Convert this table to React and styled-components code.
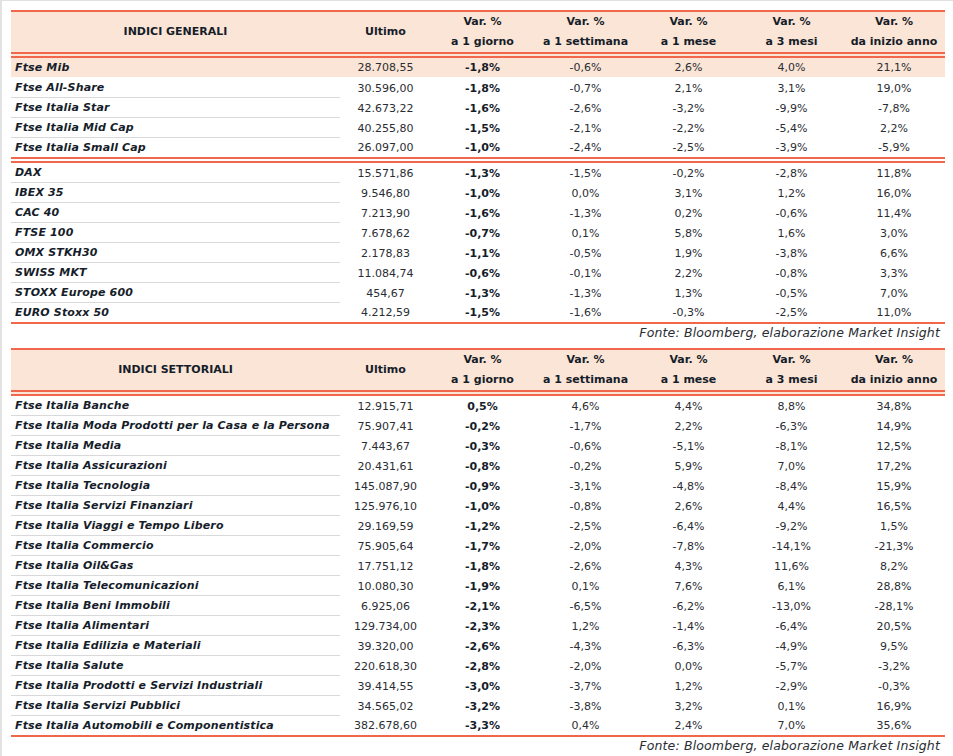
import React from "react";
import styled, { createGlobalStyle } from "styled-components";

const RED = "#f0674c";
const PEACH = "#fbe5d6";
const LINE = "#d9d9d9";
const INK = "#161d2a";

const GlobalStyle = createGlobalStyle`
  html, body {
    margin: 0;
    padding: 0;
    background: #ffffff;
  }
  body {
    font-family: "DejaVu Sans", "Liberation Sans", sans-serif;
    color: ${INK};
  }
`;

// CSS
const Frame = styled.div`
  width: 953px;
  height: 756px;
  box-sizing: border-box;
  border-left: 2px solid #e2e2e2;
  border-top: 1px solid #e2e2e2;
  padding: 9px 0 0 9px;
  overflow: hidden;
`;

const Table = styled.table`
  width: 934px;
  table-layout: fixed;
  border-collapse: separate;
  border-spacing: 0;
  font-size: 11px;
`;

const HeadCell = styled.th`
  height: 40px;
  padding: 0;
  background: ${PEACH};
  border-top: 2px solid ${RED};
  border-bottom: 6px double ${RED};
  font-weight: bold;
  font-size: 11px;
  line-height: 20px;
  text-align: center;
  vertical-align: middle;
  white-space: nowrap;
  color: ${INK};
`;

const Cell = styled.td`
  height: 19px;
  padding: 0;
  line-height: 19px;
  white-space: nowrap;
  text-align: ${(p) => (p.$name ? "left" : "center")};
  padding-left: ${(p) => (p.$name ? "4px" : "0")};
  letter-spacing: ${(p) => (p.$name ? "0.15px" : "0")};
  font-weight: ${(p) => (p.$name || p.$strong ? "bold" : "normal")};
  font-style: ${(p) => (p.$name ? "italic" : "normal")};
  color: ${(p) => (p.$name || p.$strong ? INK : "#2a2d33")};
  background: ${(p) => (p.$highlight ? PEACH : "transparent")};
  border-bottom: ${(p) =>
    p.$end === "double"
      ? `6px double ${RED}`
      : p.$end === "single"
      ? `2px solid ${RED}`
      : p.$highlight
      ? "1px solid #ffffff"
      : p.$name
      ? `1px solid ${LINE}`
      : "none"};
`;

const Source = styled.div`
  width: 934px;
  box-sizing: border-box;
  padding-right: 5px;
  height: 18px;
  line-height: 18px;
  margin-bottom: 6px;
  text-align: right;
  font-style: italic;
  font-size: 12.5px;
  letter-spacing: 0.15px;
  color: #2a2d33;
`;

const widths = [329, 91, 103, 103, 103, 103, 102];

const generali = [
  [
    ["Ftse Mib", "28.708,55", "-1,8%", "-0,6%", "2,6%", "4,0%", "21,1%"],
    ["Ftse All-Share", "30.596,00", "-1,8%", "-0,7%", "2,1%", "3,1%", "19,0%"],
    ["Ftse Italia Star", "42.673,22", "-1,6%", "-2,6%", "-3,2%", "-9,9%", "-7,8%"],
    ["Ftse Italia Mid Cap", "40.255,80", "-1,5%", "-2,1%", "-2,2%", "-5,4%", "2,2%"],
    ["Ftse Italia Small Cap", "26.097,00", "-1,0%", "-2,4%", "-2,5%", "-3,9%", "-5,9%"],
  ],
  [
    ["DAX", "15.571,86", "-1,3%", "-1,5%", "-0,2%", "-2,8%", "11,8%"],
    ["IBEX 35", "9.546,80", "-1,0%", "0,0%", "3,1%", "1,2%", "16,0%"],
    ["CAC 40", "7.213,90", "-1,6%", "-1,3%", "0,2%", "-0,6%", "11,4%"],
    ["FTSE 100", "7.678,62", "-0,7%", "0,1%", "5,8%", "1,6%", "3,0%"],
    ["OMX STKH30", "2.178,83", "-1,1%", "-0,5%", "1,9%", "-3,8%", "6,6%"],
    ["SWISS MKT", "11.084,74", "-0,6%", "-0,1%", "2,2%", "-0,8%", "3,3%"],
    ["STOXX Europe 600", "454,67", "-1,3%", "-1,3%", "1,3%", "-0,5%", "7,0%"],
    ["EURO Stoxx 50", "4.212,59", "-1,5%", "-1,6%", "-0,3%", "-2,5%", "11,0%"],
  ],
];

const settoriali = [
  [
    ["Ftse Italia Banche", "12.915,71", "0,5%", "4,6%", "4,4%", "8,8%", "34,8%"],
    ["Ftse Italia Moda Prodotti per la Casa e la Persona", "75.907,41", "-0,2%", "-1,7%", "2,2%", "-6,3%", "14,9%"],
    ["Ftse Italia Media", "7.443,67", "-0,3%", "-0,6%", "-5,1%", "-8,1%", "12,5%"],
    ["Ftse Italia Assicurazioni", "20.431,61", "-0,8%", "-0,2%", "5,9%", "7,0%", "17,2%"],
    ["Ftse Italia Tecnologia", "145.087,90", "-0,9%", "-3,1%", "-4,8%", "-8,4%", "15,9%"],
    ["Ftse Italia Servizi Finanziari", "125.976,10", "-1,0%", "-0,8%", "2,6%", "4,4%", "16,5%"],
    ["Ftse Italia Viaggi e Tempo Libero", "29.169,59", "-1,2%", "-2,5%", "-6,4%", "-9,2%", "1,5%"],
    ["Ftse Italia Commercio", "75.905,64", "-1,7%", "-2,0%", "-7,8%", "-14,1%", "-21,3%"],
    ["Ftse Italia Oil&Gas", "17.751,12", "-1,8%", "-2,6%", "4,3%", "11,6%", "8,2%"],
    ["Ftse Italia Telecomunicazioni", "10.080,30", "-1,9%", "0,1%", "7,6%", "6,1%", "28,8%"],
    ["Ftse Italia Beni Immobili", "6.925,06", "-2,1%", "-6,5%", "-6,2%", "-13,0%", "-28,1%"],
    ["Ftse Italia Alimentari", "129.734,00", "-2,3%", "1,2%", "-1,4%", "-6,4%", "20,5%"],
    ["Ftse Italia Edilizia e Materiali", "39.320,00", "-2,6%", "-4,3%", "-6,3%", "-4,9%", "9,5%"],
    ["Ftse Italia Salute", "220.618,30", "-2,8%", "-2,0%", "0,0%", "-5,7%", "-3,2%"],
    ["Ftse Italia Prodotti e Servizi Industriali", "39.414,55", "-3,0%", "-3,7%", "1,2%", "-2,9%", "-0,3%"],
    ["Ftse Italia Servizi Pubblici", "34.565,02", "-3,2%", "-3,8%", "3,2%", "0,1%", "16,9%"],
    ["Ftse Italia Automobili e Componentistica", "382.678,60", "-3,3%", "0,4%", "2,4%", "7,0%", "35,6%"],
  ],
];

const MarketTable = ({ title, groups, highlightFirst }) => (
  <Table>
    <colgroup>
      {widths.map((w, i) => (
        <col key={i} style={{ width: w }} />
      ))}
    </colgroup>
    <thead>
      <tr>
        <HeadCell>{title}</HeadCell>
        <HeadCell>Ultimo</HeadCell>
        <HeadCell>Var. %<br />a 1 giorno</HeadCell>
        <HeadCell>Var. %<br />a 1 settimana</HeadCell>
        <HeadCell>Var. %<br />a 1 mese</HeadCell>
        <HeadCell>Var. %<br />a 3 mesi</HeadCell>
        <HeadCell>Var. %<br />da inizio anno</HeadCell>
      </tr>
    </thead>
    <tbody>
      {groups.map((rows, g) =>
        rows.map((row, r) => {
          const isLast = r === rows.length - 1;
          const end = isLast ? (g === groups.length - 1 ? "single" : "double") : undefined;
          const highlight = highlightFirst && g === 0 && r === 0;
          return (
            <tr key={`${g}-${r}`}>
              {row.map((v, c) => (
                <Cell
                  key={c}
                  $name={c === 0}
                  $strong={c === 2}
                  $end={end}
                  $highlight={highlight}
                >
                  {v}
                </Cell>
              ))}
            </tr>
          );
        })
      )}
    </tbody>
  </Table>
);

const App = () => {
  return (
    <>
      <GlobalStyle />
      <Frame>
        <MarketTable title="INDICI GENERALI" groups={generali} highlightFirst />
        <Source>Fonte: Bloomberg, elaborazione Market Insight</Source>
        <MarketTable title="INDICI SETTORIALI" groups={settoriali} />
        <Source>Fonte: Bloomberg, elaborazione Market Insight</Source>
      </Frame>
    </>
  );
};

export default App;
